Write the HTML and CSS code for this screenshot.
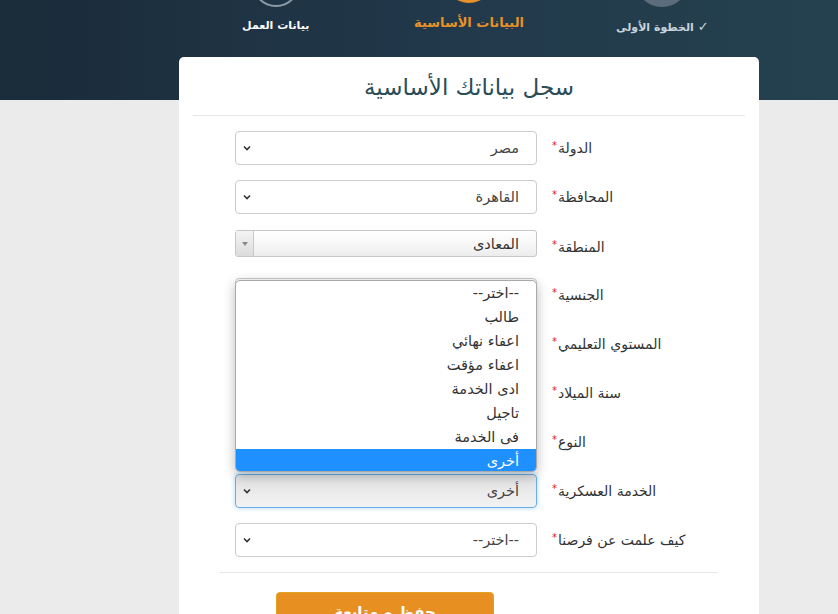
FILE: index.html
```html
<!DOCTYPE html>
<html lang="ar" dir="rtl">
<head>
<meta charset="utf-8">
<title>سجل بياناتك الأساسية</title>
<link rel="stylesheet" href="styles.css">
</head>
<body>
<header class="topbar">
  <ol class="steps">
    <li class="step step-done"><span class="dot"></span><span class="step-label"><span class="tick">✓</span> الخطوة الأولى</span></li>
    <li class="step step-current"><span class="dot"></span><span class="step-label">البيانات الأساسية</span></li>
    <li class="step step-next"><span class="dot"></span><span class="step-label">بيانات العمل</span></li>
  </ol>
</header>
<main class="page">
  <section class="card">
    <h1 class="card-title">سجل بياناتك الأساسية</h1>
    <hr class="rule">
    <form class="form">
      <div class="row">
        <label class="label">الدولة<span class="req">*</span></label>
        <div class="select"><span class="value">مصر</span><svg class="chev" width="8" height="6" viewBox="0 0 8 6"><path d="M1 1.5 L4 4.5 L7 1.5" fill="none" stroke="#333" stroke-width="1.6"/></svg></div>
      </div>
      <div class="row">
        <label class="label">المحافظة<span class="req">*</span></label>
        <div class="select"><span class="value">القاهرة</span><svg class="chev" width="8" height="6" viewBox="0 0 8 6"><path d="M1 1.5 L4 4.5 L7 1.5" fill="none" stroke="#333" stroke-width="1.6"/></svg></div>
      </div>
      <div class="row row-top">
        <label class="label">المنطقة<span class="req">*</span></label>
        <div class="select-legacy"><span class="value">المعادى</span><span class="legacy-btn"><svg width="6" height="4" viewBox="0 0 6 4"><path d="M0 0 L6 0 L3 4 Z" fill="#888"/></svg></span></div>
      </div>
      <div class="row">
        <label class="label">الجنسية<span class="req">*</span></label>
        <div class="select is-covered"><span class="value">--اختر--</span><svg class="chev" width="8" height="6" viewBox="0 0 8 6"><path d="M1 1.5 L4 4.5 L7 1.5" fill="none" stroke="#333" stroke-width="1.6"/></svg></div>
      </div>
      <div class="row">
        <label class="label">المستوي التعليمي<span class="req">*</span></label>
        <div class="select is-covered"><span class="value">--اختر--</span><svg class="chev" width="8" height="6" viewBox="0 0 8 6"><path d="M1 1.5 L4 4.5 L7 1.5" fill="none" stroke="#333" stroke-width="1.6"/></svg></div>
      </div>
      <div class="row">
        <label class="label">سنة الميلاد<span class="req">*</span></label>
        <div class="select is-covered"><span class="value">--اختر--</span><svg class="chev" width="8" height="6" viewBox="0 0 8 6"><path d="M1 1.5 L4 4.5 L7 1.5" fill="none" stroke="#333" stroke-width="1.6"/></svg></div>
      </div>
      <div class="row">
        <label class="label">النوع<span class="req">*</span></label>
        <div class="select is-covered"><span class="value">--اختر--</span><svg class="chev" width="8" height="6" viewBox="0 0 8 6"><path d="M1 1.5 L4 4.5 L7 1.5" fill="none" stroke="#333" stroke-width="1.6"/></svg></div>
      </div>
      <div class="row">
        <label class="label">الخدمة العسكرية<span class="req">*</span></label>
        <div class="select select-focus"><span class="value">أخرى</span><svg class="chev" width="8" height="6" viewBox="0 0 8 6"><path d="M1 1.5 L4 4.5 L7 1.5" fill="none" stroke="#333" stroke-width="1.6"/></svg></div>
      </div>
      <div class="row">
        <label class="label">كيف علمت عن فرصنا<span class="req">*</span></label>
        <div class="select"><span class="value">--اختر--</span><svg class="chev" width="8" height="6" viewBox="0 0 8 6"><path d="M1 1.5 L4 4.5 L7 1.5" fill="none" stroke="#333" stroke-width="1.6"/></svg></div>
      </div>

      <ul class="listbox">
        <li>--اختر--</li>
        <li>طالب</li>
        <li>اعفاء نهائي</li>
        <li>اعفاء مؤقت</li>
        <li>ادى الخدمة</li>
        <li>تاجيل</li>
        <li>فى الخدمة</li>
        <li class="selected">أخرى</li>
      </ul>

      <hr class="rule rule-form">
      <div class="actions">
        <button type="button" class="btn">حفظ و متابعة</button>
      </div>
    </form>
  </section>
</main>
</body>
</html>
```

FILE: styles.css
```css
* { box-sizing: border-box; }

html, body {
  margin: 0;
  padding: 0;
}

body {
  background: #ebebeb;
  font-family: "DejaVu Sans", "Noto Sans", sans-serif;
  color: #333;
  overflow: hidden;
  height: 614px;
}

.topbar {
  height: 100px;
  background: linear-gradient(to right, #1a2b39 0%, #21384a 50%, #25414f 100%);
  overflow: hidden;
}

.steps {
  list-style: none;
  margin: 0 79px 0 0;
  padding: 0;
  width: 580px;
  display: flex;
}

.step {
  flex: 1 1 0;
  display: flex;
  flex-direction: column;
  align-items: center;
}

.dot {
  display: block;
  width: 48px;
  height: 48px;
  border-radius: 50%;
  margin-top: -41px;
}

.step-done .dot {
  width: 54px;
  height: 54px;
  margin-top: -47px;
  background: #5b6d7a;
}

.step-current .dot {
  width: 50px;
  height: 50px;
  margin-top: -47px;
  background: #e8912a;
}

.step-next .dot {
  border: 2px solid #8c9ba6;
  background: transparent;
}

.step-label {
  margin-top: 12px;
  font-size: 11px;
  font-weight: bold;
  white-space: nowrap;
}

.tick {
  font-size: 13px;
  font-weight: normal;
}

.step-done .step-label { color: #c8d3dc; }
.step-next .step-label { color: #ffffff; }
.step-current .step-label {
  color: #e8912a;
  font-size: 13px;
  margin-top: 12px;
}

.page {
  margin: -43px 79px 0 0;
  width: 580px;
}

.card {
  background: #fff;
  border-radius: 5px 5px 0 0;
  padding: 15px 14px 40px;
}

.card-title {
  margin: 0;
  text-align: center;
  font-size: 23px;
  font-weight: normal;
  line-height: 30px;
  color: #2a4d57;
}

.rule {
  border: 0;
  border-top: 1px solid #e6e6e6;
  margin: 13px 0 15px;
  height: 0;
}

.form {
  position: relative;
  margin: 0 27px;
}

.row {
  display: flex;
  align-items: center;
  gap: 15px;
  height: 34px;
  margin-bottom: 15px;
  padding-left: 15px;
}

.row-top {
  align-items: flex-start;
}

.row-top .label { align-self: center; margin-top: 2px; }

.label {
  width: 166px;
  text-align: left;
  font-size: 14px;
  color: #333;
  white-space: nowrap;
}

.req {
  color: #e21c1c;
  font-size: 10px;
  vertical-align: 4px;
  margin-right: 1px;
}

.select {
  width: 302px;
  height: 34px;
  border: 1px solid #cccccc;
  border-radius: 4px;
  background: #fff;
  display: flex;
  align-items: center;
  justify-content: space-between;
  padding: 0 17px 0 7px;
  font-size: 14.5px;
  color: #444;
}

.is-covered .value { visibility: hidden; }

.select-focus {
  border-color: #66afe9;
  background: linear-gradient(to bottom, #dedede 0%, #ececec 60%, #f2f2f2 100%);
  box-shadow: 0 0 5px rgba(102, 175, 233, 0.5);
}

.chev { flex: none; }

.select-legacy {
  width: 302px;
  height: 27px;
  margin-top: 1px;
  border: 1px solid #c6c6c6;
  border-radius: 3px;
  background: linear-gradient(to bottom, #ffffff 0%, #f6f6f6 60%, #ececec 100%);
  display: flex;
  align-items: center;
  justify-content: space-between;
  padding: 0 17px 0 0;
  font-size: 14.5px;
  color: #333;
}

.legacy-btn {
  width: 18px;
  height: 100%;
  border-right: 1px solid #c9c9c9;
  background: linear-gradient(to bottom, #f4f4f4, #dcdcdc);
  border-radius: 0 0 0 2px;
  display: flex;
  align-items: center;
  justify-content: center;
}

.listbox {
  position: absolute;
  top: 149px;
  left: 15px;
  width: 302px;
  height: 192px;
  margin: 0;
  padding: 0;
  list-style: none;
  background: #fff;
  border: 1px solid #a9a9a9;
  border-radius: 5px;
  box-shadow: 0 3px 12px rgba(0, 0, 0, 0.28);
  overflow: hidden;
  z-index: 5;
}

.listbox li {
  height: 24px;
  line-height: 24px;
  padding-right: 17px;
  font-size: 14.5px;
  color: #333;
}

.listbox li.selected {
  background: #1e90ff;
  color: #fff;
  height: 23px;
}

.rule-form {
  margin: 0;
}

.actions {
  display: flex;
  justify-content: flex-end;
  padding: 19px 0 0;
  margin-left: 56px;
}

.btn {
  width: 218px;
  height: 40px;
  background: #e88f22;
  border: 1px solid #e2a11e;
  border-radius: 4px;
  color: #fff;
  font-family: "DejaVu Sans", sans-serif;
  font-size: 15px;
  font-weight: bold;
  padding: 0;
  line-height: 36px;
}
```
